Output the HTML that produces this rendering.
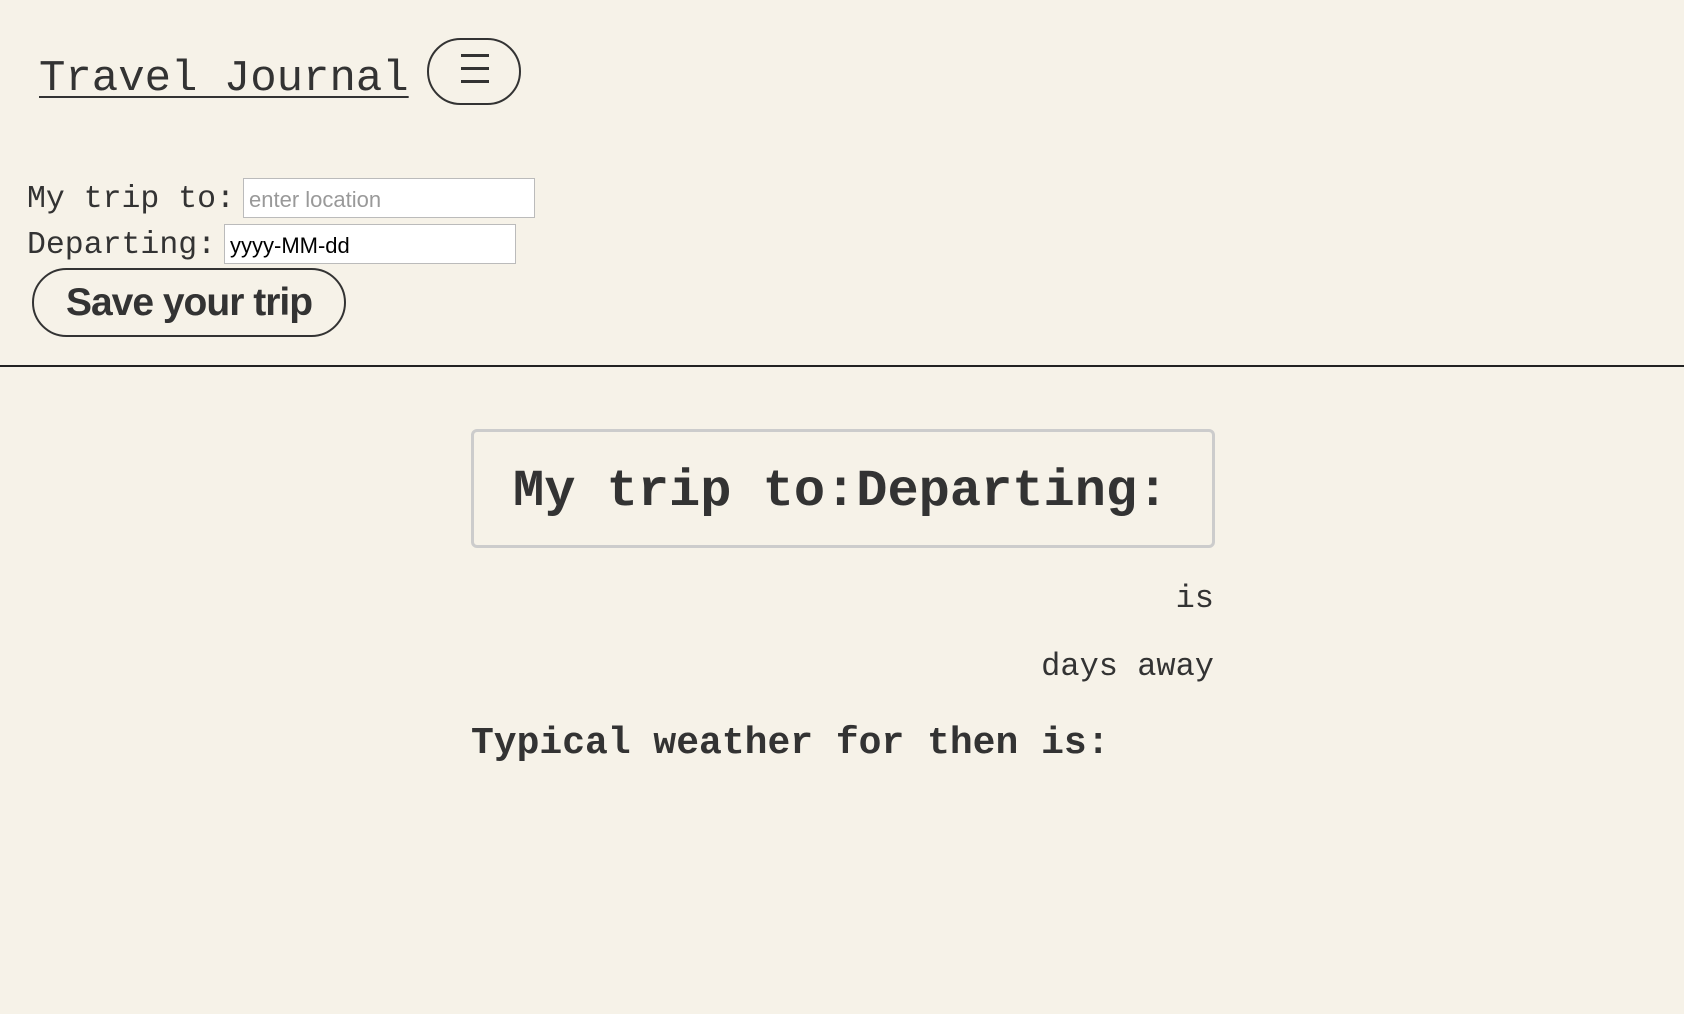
<!DOCTYPE html>
<html><head><meta charset="utf-8"><style>
html,body{margin:0;padding:0;}
body{width:1684px;height:1014px;background:#f6f2e8;color:#333;font-family:"Liberation Mono",monospace;position:relative;overflow:hidden;}
.a{position:absolute;white-space:nowrap;}
#title{left:39px;top:52px;font-size:44px;line-height:54px;text-decoration:underline;text-decoration-thickness:2px;text-underline-offset:6px;}
#menu{left:427px;top:38px;width:94px;height:67px;border:2px solid #333;border-radius:34px;box-sizing:border-box;}
#menu i{position:absolute;left:32px;width:28px;height:3px;background:#333;}
.lbl{font-size:31.5px;line-height:36px;}
.inp{background:#fff;border:1px solid #bbb;box-sizing:border-box;font-family:"Liberation Sans",sans-serif;font-size:22px;line-height:42px;padding-left:5px;}
#save{left:32px;top:268px;width:314px;height:69px;border:2px solid #333;border-radius:35px;box-sizing:border-box;font-family:"Liberation Sans",sans-serif;font-weight:bold;font-size:39px;line-height:65px;text-align:center;letter-spacing:-1px;}
#hr{left:0;top:365px;width:1684px;height:2px;background:#222;}
#box{left:471px;top:429px;width:744px;height:119px;border:3px solid #ccc;border-radius:6px;box-sizing:border-box;}
#h{left:513px;top:462px;font-size:52px;font-weight:bold;line-height:60px;}
.r{right:470px;font-size:32px;line-height:36px;}
#tw{left:471px;top:722px;font-size:38px;font-weight:bold;line-height:44px;}
</style></head><body>
<div class="a" id="title">Travel Journal</div>
<div class="a" id="menu"><i style="top:14px"></i><i style="top:27px"></i><i style="top:40px"></i></div>
<div class="a lbl" style="left:27px;top:182px">My trip to:</div>
<div class="a inp" style="left:243px;top:178px;width:292px;height:40px;color:#999">enter location</div>
<div class="a lbl" style="left:27px;top:228px">Departing:</div>
<div class="a inp" style="left:224px;top:224px;width:292px;height:40px;color:#000">yyyy-MM-dd</div>
<div class="a" id="save">Save your trip</div>
<div class="a" id="hr"></div>
<div class="a" id="box"></div>
<div class="a" id="h">My trip to:Departing:</div>
<div class="a r" style="top:581px">is</div>
<div class="a r" style="top:649px">days away</div>
<div class="a" id="tw">Typical weather for then is:</div>
</body></html>
